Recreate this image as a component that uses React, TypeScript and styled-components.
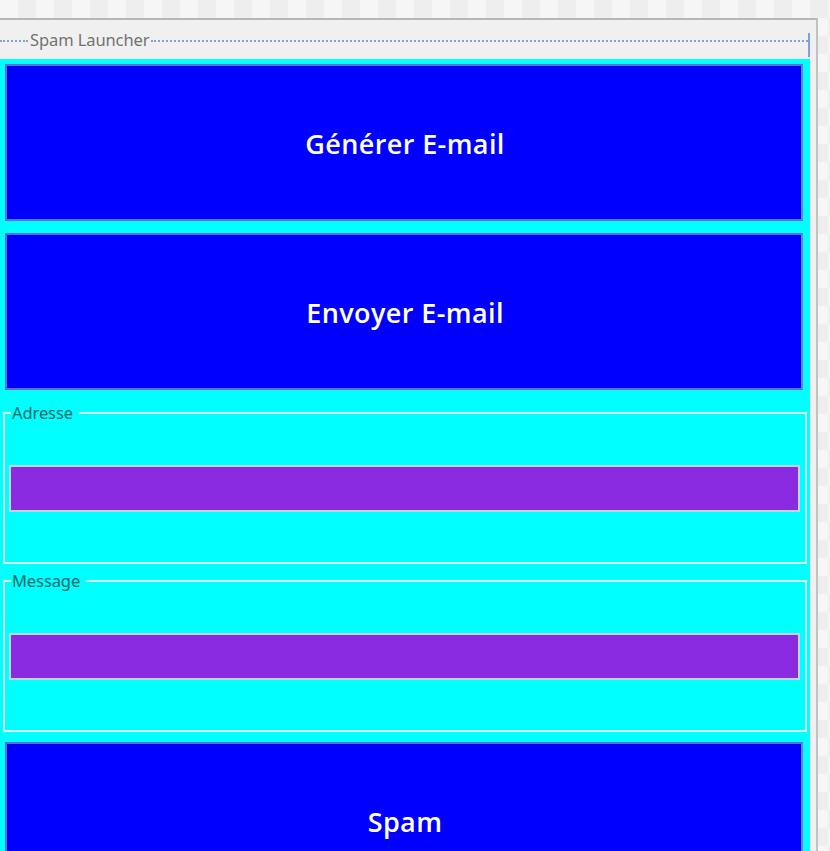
import React from "react";
import styled, { createGlobalStyle } from "styled-components";

const Global = createGlobalStyle`
  html, body {
    margin: 0;
    padding: 0;
    height: 100%;
    overflow: hidden;
  }
  body {
    font-family: "Noto Sans", "Open Sans", sans-serif;
    background-color: #f6f6f6;
    background-image: conic-gradient(#eeeeee 25%, #f6f6f6 0 50%, #eeeeee 0 75%, #f6f6f6 0);
    background-size: 36px 36px;
  }
`;

const Frame = styled.div`
  margin-top: 18px;
  width: 818px;
  height: 833px;
  box-sizing: border-box;
  border-top: 2px solid #b6b6b6;
  border-right: 2px solid #c2c2c2;
  background: #f0f0f0;
  padding-right: 6px;
  display: flex;
  flex-direction: column;
`;

const Header = styled.div`
  height: 39px;
  display: flex;
  align-items: center;
`;

const DottedLine = styled.div`
  flex: 1;
  height: 0;
  border-top: 2px dotted #7f9fd6;
  margin-top: 2px;
`;

const Lead = styled.div`
  width: 28px;
  height: 0;
  border-top: 2px dotted #7f9fd6;
  margin-top: 2px;
`;

const Title = styled.span`
  font-family: "Noto Sans", sans-serif;
  font-size: 16.5px;
  color: #727272;
  padding: 0 2px;
  letter-spacing: -0.1px;
`;

const EndTick = styled.div`
  width: 2px;
  height: 24px;
  background: #7f9fd6;
  align-self: flex-end;
  margin-bottom: 2px;
`;

const Panel = styled.div`
  flex: 1;
  background: #00ffff;
  display: flex;
  flex-direction: column;
  padding: 5px 3px 0 3px;
  overflow: hidden;
`;

const BigButton = styled.button<{ $gap?: number }>`
  flex: none;
  height: 157px;
  margin: 0 4px ${(p) => p.$gap ?? 0}px 2px;
  box-sizing: border-box;
  background: #0000ff;
  border: 2px solid #5b73d8;
  border-right-color: #6f7fd0;
  color: #ffffff;
  font-family: "Open Sans", "Noto Sans", sans-serif;
  font-weight: 600;
  font-size: 27px;
  letter-spacing: 0.4px;
  display: flex;
  align-items: center;
  justify-content: center;
  padding: 2px 0 0 2px;
  cursor: pointer;
`;

const Group = styled.fieldset<{ $gap?: number }>`
  margin: 0 0 ${(p) => p.$gap ?? 0}px 0;
  border: 2px solid #d6ffff;
  padding: 44px 5px 50px 4px;
  min-width: 0;
`;

const Legend = styled.legend`
  font-family: "Noto Sans", sans-serif;
  font-size: 16.5px;
  color: #0b6a6a;
  padding: 0 6px 0 1px;
  margin-left: 2px;
  line-height: 16px;
  letter-spacing: -0.1px;
`;

const Field = styled.input`
  display: block;
  width: 100%;
  height: 47px;
  box-sizing: border-box;
  background: #8a2be2;
  border: 2px solid #b8d8f4;
  outline: none;
  color: #ffffff;
  font-size: 14px;
`;

export default function App() {
  return (
    <>
      <Global />
      <Frame>
        <Header>
          <Lead />
          <Title>Spam Launcher</Title>
          <DottedLine />
          <EndTick />
        </Header>
        <Panel>
          <BigButton $gap={12}>Générer E-mail</BigButton>
          <BigButton $gap={15}>Envoyer E-mail</BigButton>
          <Group $gap={9}>
            <Legend>Adresse</Legend>
            <Field defaultValue="" />
          </Group>
          <Group $gap={10}>
            <Legend>Message</Legend>
            <Field defaultValue="" />
          </Group>
          <BigButton>Spam</BigButton>
        </Panel>
      </Frame>
    </>
  );
}
